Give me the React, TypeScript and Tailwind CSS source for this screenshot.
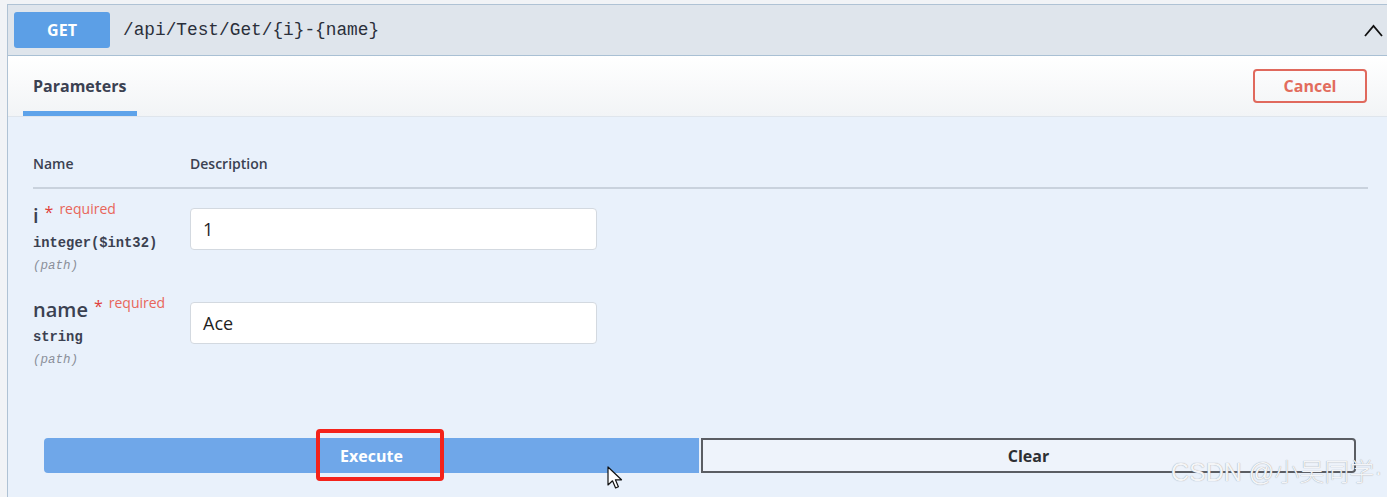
import {ReactNode} from 'react'

const sans = "font-['Open_Sans','Noto_Sans',sans-serif]"
const mono = "font-['Liberation_Mono','DejaVu_Sans_Mono',monospace]"

type Param = {
  name: string
  type: string
  value: string
}

const params: Param[] = [
  {name: 'i', type: 'integer($int32)', value: '1'},
  {name: 'name', type: 'string', value: 'Ace'},
]

// 参数一行
function ParamRow({param}: { param: Param }) {
  return (
    <div className="flex">
      <div className="w-[157px] shrink-0">
        <div className="flex h-[27px] items-start">
          <span className="mt-[4px] text-[20px] leading-[24px] font-semibold text-[#3b4151]">{param.name}</span>
          <span className="ml-[6px] mt-[3px] text-[16px] leading-[18px] text-[#e0403a]">*</span>
          <span className="ml-[6px] text-[14px] leading-[18px] text-[#e8655a]">required</span>
        </div>
        <div className={`${mono} mt-[8px] text-[13.8px] leading-[18px] font-bold text-[#3b4151]`}>
          {param.type}
        </div>
        <div className={`${mono} mt-[4px] text-[12.5px] leading-[18px] italic text-[#8a8f99]`}>
          (path)
        </div>
      </div>
      <div className="mt-[8px] flex h-[42px] w-[407px] items-center rounded-[4px] border border-[#d3d9e0] bg-white pl-[12px] text-[18px] text-[#1f1f1f]">
        {param.value}
      </div>
    </div>
  )
}

function Header() {
  return (
    <div className="flex h-[51px] items-center border-b border-[#a9c0d4] bg-[#dfe5ec] pl-[6px] pr-[10px]">
      <div className="flex h-[36px] w-[96px] items-center justify-center rounded-[3px] bg-[#5c9fe6] text-[16px] font-bold text-white">
        GET
      </div>
      <div className={`${mono} ml-[13px] flex-1 text-[17.8px] text-[#2a2f3a]`}>/api/Test/Get/{'{i}'}-{'{name}'}</div>
      <svg width="19" height="13" viewBox="0 0 19 13" fill="none" stroke="#111" strokeWidth="1.8">
        <path d="M1 12 L9.5 2 L18 12"/>
      </svg>
    </div>
  )
}

function Tabs() {
  return (
    <div className="flex h-[61px] items-start justify-between border-b border-[#dfe5ec] bg-gradient-to-b from-white to-[#f2f4f6] pl-[15px] pr-[26px]">
      <div className="flex h-[60px] flex-col">
        <div className="flex flex-1 items-center px-[10px] pt-[5px] text-[16px] font-bold text-[#3b4151]">Parameters</div>
        <div className="h-[5px] w-[114px] bg-[#5ea3ea]"/>
      </div>
      <button className="mt-[13px] h-[34px] w-[114px] rounded-[4px] border-2 border-[#e0695d] text-[16px] font-bold text-[#e26c5d]">
        Cancel
      </button>
    </div>
  )
}

function Overlay({children, className}: { children?: ReactNode, className: string }) {
  return <div className={`pointer-events-none absolute ${className}`}>{children}</div>
}

export default function App() {
  return (
    <div className={`${sans} relative h-[497px] w-full overflow-hidden bg-[#f1f3f6] pl-[7px] pt-[4px]`}>
      <div className="h-[520px] w-[1386px] border-l border-t border-[#afc2d4] bg-[#e9f1fb]">
        <Header/>
        <Tabs/>

        <div className="px-[25px] pt-[37px]">
          <div className="flex text-[14px] leading-[20px] font-semibold text-[#3b4151]">
            <div className="w-[157px]">Name</div>
            <div>Description</div>
          </div>
          <div className="mt-[13px] h-[2px] bg-[#c9d2dd]"/>

          <div className="flex flex-col gap-[19px] pt-[11px]">
            {params.map((p) => <ParamRow key={p.name} param={p}/>)}
          </div>
        </div>

        <div className="mt-[69px] grid grid-cols-2 gap-[2px] pl-[36px] pr-[37px]">
          <button className="h-[35px] rounded-l-[4px] bg-[#6fa7e9] text-[16px] font-bold text-white">Execute</button>
          <button className="h-[35px] rounded-r-[4px] border-2 border-[#5a5d63] bg-[#eef3fb] text-[16px] font-bold text-[#2d2f33]">Clear</button>
        </div>
      </div>

      {/* 红框标注 */}
      <Overlay className="left-[316px] top-[429px] h-[52px] w-[128px] rounded-[4px] border-4 border-[#f4231b]"/>

      {/* 鼠标指针 */}
      <Overlay className="left-[607px] top-[466px]">
        <svg width="17" height="24" viewBox="0 0 17 24">
          <path d="M1 1 L1 19 L5.5 14.8 L8.6 22 L11.4 20.8 L8.4 13.8 L14.5 13.8 Z" fill="#fff" stroke="#111" strokeWidth="1.2" strokeLinejoin="round"/>
        </svg>
      </Overlay>

      {/* 水印 */}
      <Overlay className="left-[1171px] top-[456px] font-['Liberation_Sans','Noto_Sans_CJK_SC',sans-serif] text-[25px] leading-[32px] font-light text-[#f4f5f7] [text-shadow:0_0_1px_#8a8f97]">
        CSDN @小吴同学·
      </Overlay>
    </div>
  )
}
